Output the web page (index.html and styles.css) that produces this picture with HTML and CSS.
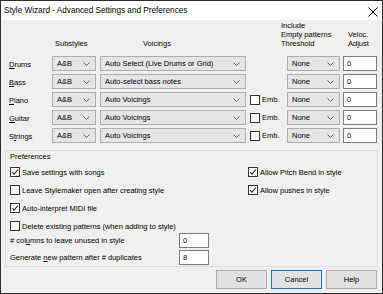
FILE: index.html
```html
<!DOCTYPE html>
<html lang="en">
<head>
    <meta charset="UTF-8">
    <title>Style Wizard - Advanced Settings and Preferences</title>
    <link rel="stylesheet" href="styles.css">
</head>
<body>
    <div class="window">
        <div class="titlebar">
            <span class="title">Style Wizard - Advanced Settings and Preferences</span>
            <svg class="close" width="10" height="10" viewBox="0 0 10 10">
                <path d="M0.5 0.5 L9.5 9.5 M9.5 0.5 L0.5 9.5" stroke="#000" stroke-width="1" fill="none"/>
            </svg>
        </div>

        <div class="tracks">
            <div class="head"></div>
            <div class="head head-sub">Substyles</div>
            <div class="head head-voc">Voicings</div>
            <div class="head head-thr">Include<br>Empty patterns<br>Threshold</div>
            <div class="head head-vel">Veloc.<br>Adjust</div>

            <!-- Drums -->
            <div class="track-name"><u>D</u>rums</div>
            <div class="combo combo-sub"><span>A&amp;B</span><svg class="chev" width="7" height="4" viewBox="0 0 7 4"><polyline points="0.5,0.5 3.5,3.5 6.5,0.5" fill="none" stroke="#606060"/></svg></div>
            <div class="combo combo-voc"><span>Auto Select (Live Drums or Grid)</span><svg class="chev" width="7" height="4" viewBox="0 0 7 4"><polyline points="0.5,0.5 3.5,3.5 6.5,0.5" fill="none" stroke="#606060"/></svg></div>
            <div class="emb-cell"></div>
            <div class="combo combo-thr"><span>None</span><svg class="chev" width="7" height="4" viewBox="0 0 7 4"><polyline points="0.5,0.5 3.5,3.5 6.5,0.5" fill="none" stroke="#606060"/></svg></div>
            <div class="edit edit-vel">0</div>

            <!-- Bass -->
            <div class="track-name"><u>B</u>ass</div>
            <div class="combo combo-sub"><span>A&amp;B</span><svg class="chev" width="7" height="4" viewBox="0 0 7 4"><polyline points="0.5,0.5 3.5,3.5 6.5,0.5" fill="none" stroke="#606060"/></svg></div>
            <div class="combo combo-voc"><span>Auto-select bass notes</span><svg class="chev" width="7" height="4" viewBox="0 0 7 4"><polyline points="0.5,0.5 3.5,3.5 6.5,0.5" fill="none" stroke="#606060"/></svg></div>
            <div class="emb-cell"></div>
            <div class="combo combo-thr"><span>None</span><svg class="chev" width="7" height="4" viewBox="0 0 7 4"><polyline points="0.5,0.5 3.5,3.5 6.5,0.5" fill="none" stroke="#606060"/></svg></div>
            <div class="edit edit-vel">0</div>

            <!-- Piano -->
            <div class="track-name"><u>P</u>iano</div>
            <div class="combo combo-sub"><span>A&amp;B</span><svg class="chev" width="7" height="4" viewBox="0 0 7 4"><polyline points="0.5,0.5 3.5,3.5 6.5,0.5" fill="none" stroke="#606060"/></svg></div>
            <div class="combo combo-voc"><span>Auto Voicings</span><svg class="chev" width="7" height="4" viewBox="0 0 7 4"><polyline points="0.5,0.5 3.5,3.5 6.5,0.5" fill="none" stroke="#606060"/></svg></div>
            <div class="emb-cell"><span class="box"></span>Emb.</div>
            <div class="combo combo-thr"><span>None</span><svg class="chev" width="7" height="4" viewBox="0 0 7 4"><polyline points="0.5,0.5 3.5,3.5 6.5,0.5" fill="none" stroke="#606060"/></svg></div>
            <div class="edit edit-vel">0</div>

            <!-- Guitar -->
            <div class="track-name"><u>G</u>uitar</div>
            <div class="combo combo-sub"><span>A&amp;B</span><svg class="chev" width="7" height="4" viewBox="0 0 7 4"><polyline points="0.5,0.5 3.5,3.5 6.5,0.5" fill="none" stroke="#606060"/></svg></div>
            <div class="combo combo-voc"><span>Auto Voicings</span><svg class="chev" width="7" height="4" viewBox="0 0 7 4"><polyline points="0.5,0.5 3.5,3.5 6.5,0.5" fill="none" stroke="#606060"/></svg></div>
            <div class="emb-cell"><span class="box"></span>Emb.</div>
            <div class="combo combo-thr"><span>None</span><svg class="chev" width="7" height="4" viewBox="0 0 7 4"><polyline points="0.5,0.5 3.5,3.5 6.5,0.5" fill="none" stroke="#606060"/></svg></div>
            <div class="edit edit-vel">0</div>

            <!-- Strings -->
            <div class="track-name">S<u>t</u>rings</div>
            <div class="combo combo-sub"><span>A&amp;B</span><svg class="chev" width="7" height="4" viewBox="0 0 7 4"><polyline points="0.5,0.5 3.5,3.5 6.5,0.5" fill="none" stroke="#606060"/></svg></div>
            <div class="combo combo-voc"><span>Auto Voicings</span><svg class="chev" width="7" height="4" viewBox="0 0 7 4"><polyline points="0.5,0.5 3.5,3.5 6.5,0.5" fill="none" stroke="#606060"/></svg></div>
            <div class="emb-cell"><span class="box"></span>Emb.</div>
            <div class="combo combo-thr"><span>None</span><svg class="chev" width="7" height="4" viewBox="0 0 7 4"><polyline points="0.5,0.5 3.5,3.5 6.5,0.5" fill="none" stroke="#606060"/></svg></div>
            <div class="edit edit-vel">0</div>
        </div>

        <div class="group">
            <div class="prefs-left">
                <div class="group-title">Preferences</div>
                <div class="check-row first"><span class="box checked"><svg width="8" height="8" viewBox="0 0 8 8"><polyline points="1,4 3,6.2 7,1.5" fill="none" stroke="#222" stroke-width="1.1"/></svg></span>Save settings with songs</div>
                <div class="check-row"><span class="box"></span>Leave Stylemaker open after creating style</div>
                <div class="check-row"><span class="box checked"><svg width="8" height="8" viewBox="0 0 8 8"><polyline points="1,4 3,6.2 7,1.5" fill="none" stroke="#222" stroke-width="1.1"/></svg></span>Auto-interpret MIDI file</div>
                <div class="check-row"><span class="box"></span>Delete existing patterns (when adding to style)</div>
                <div class="edit-row first-edit"><span class="edit-label"># col<u>u</u>mns to leave unused in style</span><div class="edit edit-pref">0</div></div>
                <div class="edit-row"><span class="edit-label">Generate <u>n</u>ew pattern after # duplicates</span><div class="edit edit-pref">8</div></div>
            </div>
            <div class="prefs-right">
                <div class="check-row first"><span class="box checked"><svg width="8" height="8" viewBox="0 0 8 8"><polyline points="1,4 3,6.2 7,1.5" fill="none" stroke="#222" stroke-width="1.1"/></svg></span>Allow Pitch Bend in style</div>
                <div class="check-row"><span class="box checked"><svg width="8" height="8" viewBox="0 0 8 8"><polyline points="1,4 3,6.2 7,1.5" fill="none" stroke="#222" stroke-width="1.1"/></svg></span>Allow pushes in style</div>
            </div>
        </div>

        <div class="buttons">
            <button class="button">OK</button>
            <button class="button default">Cancel</button>
            <button class="button">Help</button>
        </div>
    </div>
</body>
</html>
```

FILE: styles.css
```css
body {
    margin: 0;
    padding: 0;
    font-family: "Liberation Sans", Arial, sans-serif;
    font-size: 7.5px;
    color: #000;
    background-color: #fff;
}
.window {
    width: 383px;
    height: 294px;
    box-sizing: border-box;
    border: 1px solid #2e2e2e;
    background-color: #f0f0f0;
    display: flex;
    flex-direction: column;
}
.titlebar {
    height: 19px;
    background-color: #fff;
    display: flex;
    align-items: center;
    justify-content: space-between;
    padding: 0 4px 0 3px;
}
.title {
    font-size: 8.2px;
}
.close {
    display: block;
    margin-top: 2px;
}
.tracks {
    display: grid;
    grid-template-columns: 43px 48px 149px 38px 56px 34px;
    grid-template-rows: 32px repeat(5, 15px);
    row-gap: 3px;
    padding: 1px 0 0 8px;
}
.head {
    align-self: end;
    padding-bottom: 5px;
    line-height: 9px;
}
.head-sub {
    padding-left: 3px;
}
.head-voc {
    padding-left: 43px;
}
.head-thr {
    grid-column: span 2;
    padding-left: 32px;
    white-space: nowrap;
}
.head-vel {
    padding-left: 5px;
    white-space: nowrap;
}
.track-name {
    display: flex;
    align-items: center;
    padding-top: 1px;
}
.combo {
    box-sizing: border-box;
    height: 15px;
    background-color: #e5e5e5;
    border: 1px solid #adadad;
    display: flex;
    align-items: center;
    justify-content: space-between;
    padding: 0 5px 0 4px;
    white-space: nowrap;
}
.combo-sub {
    width: 44px;
}
.combo-voc {
    width: 146px;
}
.combo-thr {
    width: 53px;
}
.chev {
    display: block;
    flex-shrink: 0;
}
.edit {
    box-sizing: border-box;
    height: 15px;
    background-color: #fff;
    border: 1px solid #7a7a7a;
    padding-left: 3px;
    display: flex;
    align-items: center;
}
.edit-vel {
    width: 34px;
}
.emb-cell {
    display: flex;
    align-items: center;
    gap: 2px;
    padding-left: 1px;
}
.box {
    box-sizing: border-box;
    width: 10px;
    height: 10px;
    border: 1px solid #333;
    background-color: #fff;
    display: flex;
    align-items: center;
    justify-content: center;
    flex-shrink: 0;
}
.box svg {
    display: block;
}
.group {
    margin: 7px 4px 0 4px;
    border: 1px solid #dcdcdc;
    display: flex;
    padding: 0 0 1px 4px;
}
.prefs-left {
    width: 238px;
    display: flex;
    flex-direction: column;
}
.prefs-right {
    display: flex;
    flex-direction: column;
    padding-top: 11px;
}
.group-title {
    height: 10px;
    line-height: 10px;
    margin-top: 1px;
}
.check-row {
    height: 14px;
    display: flex;
    align-items: center;
    gap: 2px;
    margin-top: 4px;
    white-space: nowrap;
}
.check-row.first {
    margin-top: 3px;
}
.edit-row {
    display: flex;
    align-items: center;
    margin-top: 2px;
}
.edit-row.first-edit {
    margin-top: 0;
}
.edit-label {
    width: 169px;
}
.edit-pref {
    width: 30px;
}
.buttons {
    display: flex;
    justify-content: flex-end;
    gap: 4px;
    padding: 3px 5px 0 0;
}
.button {
    box-sizing: border-box;
    width: 51px;
    height: 19px;
    margin: 0;
    padding: 0;
    background-color: #e1e1e1;
    border: 1px solid #adadad;
    font-family: "Liberation Sans", Arial, sans-serif;
    font-size: 7.5px;
    color: #000;
}
.button.default {
    border: 1px solid #0078d7;
}
```
